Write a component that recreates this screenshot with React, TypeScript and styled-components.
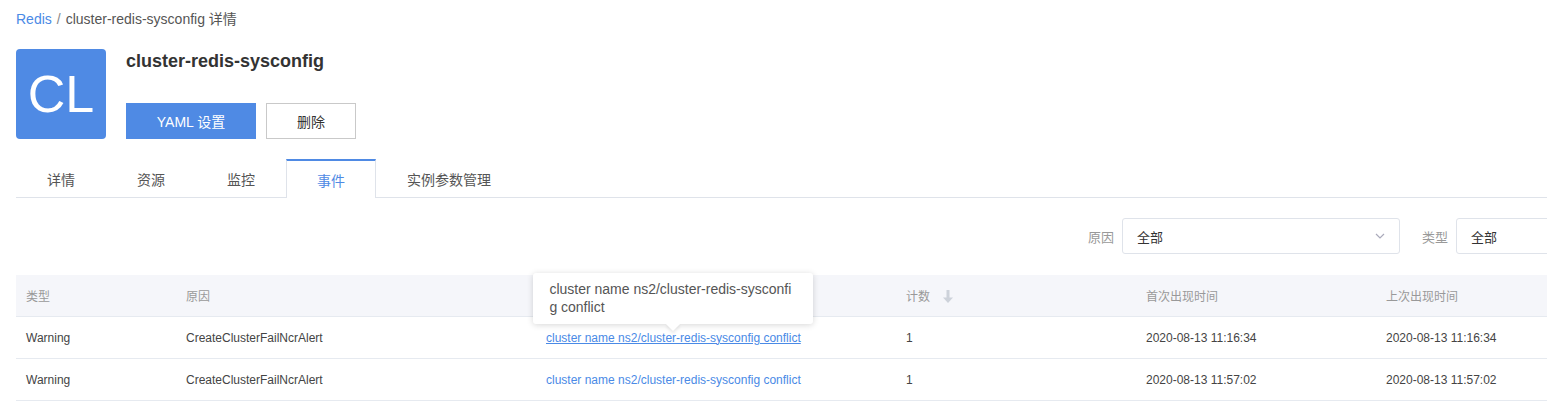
import React from 'react';
import styled, { createGlobalStyle } from 'styled-components';

const Global = createGlobalStyle`
  html, body {
    margin: 0;
    overflow: hidden;
    background: #fff;
  }
  body {
    font-family: "Liberation Sans", Arial, "Noto Sans CJK SC", sans-serif;
    color: #333;
  }
`;

const Page = styled.div`
  width: 1718px;
  padding: 10px 0 0 16px;
`;

const Breadcrumb = styled.div`
  font-size: 14px;
  line-height: 18px;
  color: #555;
  height: 18px;
`;

const Crumb = styled.a`
  color: #4a8ae6;
  text-decoration: none;
`;

const Sep = styled.span`
  margin: 0 5px;
  color: #888;
`;

const Header = styled.div`
  display: flex;
  gap: 20px;
  margin-top: 21px;
`;

const Avatar = styled.div`
  width: 90px;
  height: 90px;
  border-radius: 4px;
  background: #4f8ae4;
  color: #fff;
  font-size: 52px;
  display: flex;
  align-items: center;
  justify-content: center;
`;

const Info = styled.div`
  display: flex;
  flex-direction: column;
`;

const Title = styled.h1`
  margin: 0;
  font-size: 18px;
  line-height: 24px;
  font-weight: bold;
  color: #333;
`;

const Actions = styled.div`
  display: flex;
  gap: 10px;
  margin-top: 30px;
`;

const Button = styled.button<{ $primary?: boolean }>`
  height: 36px;
  width: ${p => (p.$primary ? 130 : 90)}px;
  font: inherit;
  font-size: 14px;
  border-radius: 0;
  cursor: pointer;
  ${p =>
    p.$primary
      ? `
    background: #4f8ae4;
    border: 1px solid #4f8ae4;
    color: #fff;
  `
      : `
    background: #fff;
    border: 1px solid #c9c9c9;
    color: #333;
  `}
`;

const TabBar = styled.div`
  display: flex;
  margin-top: 20px;
  height: 38px;
  border-bottom: 1px solid #dfe3ea;
`;

const Tab = styled.div<{ $active?: boolean }>`
  box-sizing: border-box;
  padding: 0 30px;
  height: ${p => (p.$active ? 39 : 38)}px;
  display: flex;
  align-items: center;
  font-size: 14px;
  color: ${p => (p.$active ? '#4f8ae4' : '#555')};
  border: 1px solid ${p => (p.$active ? '#dfe3ea' : 'transparent')};
  border-top: 2px solid ${p => (p.$active ? '#4f8ae4' : 'transparent')};
  border-bottom: none;
  background: ${p => (p.$active ? '#fff' : 'transparent')};
`;

const Filters = styled.div`
  display: flex;
  justify-content: flex-end;
  align-items: center;
  gap: 22px;
  margin-top: 20px;
`;

const Field = styled.label`
  display: flex;
  align-items: center;
  gap: 8px;
  font-size: 13px;
  color: #999;
`;

const Select = styled.div`
  box-sizing: border-box;
  width: 278px;
  height: 36px;
  border: 1px solid #dfe3ea;
  border-radius: 3px;
  padding: 0 14px;
  display: flex;
  align-items: center;
  justify-content: space-between;
  font-size: 13px;
  color: #333;
`;

const Chevron = () => (
  <svg width="10" height="6" viewBox="0 0 10 6">
    <path d="M1 1l4 4 4-4" fill="none" stroke="#aab" strokeWidth="1.2" />
  </svg>
);

const Table = styled.table`
  margin-top: 21px;
  border-collapse: separate;
  border-spacing: 0;
  table-layout: fixed;
  width: 100%;
  font-size: 12px;
`;

const Th = styled.th<{ $w?: number }>`
  width: ${p => (p.$w ? `${p.$w}px` : 'auto')};
  background: #f5f6fa;
  color: #999;
  font-weight: normal;
  text-align: left;
  height: 42px;
  padding: 0 10px;
  box-sizing: border-box;
  border-bottom: 1px solid #e6eaf0;
`;

const Td = styled.td`
  height: 42px;
  box-sizing: border-box;
  padding: 0 10px;
  color: #444;
  border-bottom: 1px solid #e6eaf0;
  white-space: nowrap;
`;

const SortIcon = () => (
  <svg width="12" height="14" viewBox="0 0 12 14" style={{ marginLeft: 12, verticalAlign: -3 }}>
    <path d="M6 0v9" stroke="#cdd2da" strokeWidth="3" />
    <path d="M1 7.5h10L6 13z" fill="#cdd2da" />
  </svg>
);

const MsgWrap = styled.span`
  position: relative;
  display: inline-block;
`;

const MsgLink = styled.a<{ $hover?: boolean }>`
  color: #4a8ae6;
  text-decoration: ${p => (p.$hover ? 'underline' : 'none')};
`;

const Tooltip = styled.div`
  position: absolute;
  bottom: calc(100% + 7px);
  left: 50%;
  transform: translateX(-50%);
  width: 280px;
  box-sizing: border-box;
  padding: 7px 16px 8px;
  background: #fff;
  border-radius: 3px;
  box-shadow: 0 1px 6px rgba(0, 0, 0, 0.16);
  font-size: 14px;
  line-height: 18px;
  color: #555;
  white-space: normal;
  word-break: break-all;
  z-index: 2;

  &::after {
    content: '';
    position: absolute;
    left: 50%;
    bottom: -5px;
    width: 10px;
    height: 10px;
    background: #fff;
    transform: translateX(-50%) rotate(45deg);
    box-shadow: 2px 2px 3px rgba(0, 0, 0, 0.08);
  }
`;

const events = [
  { type: 'Warning', reason: 'CreateClusterFailNcrAlert', msg: 'cluster name ns2/cluster-redis-sysconfig conflict', count: 1, first: '2020-08-13 11:16:34', last: '2020-08-13 11:16:34' },
  { type: 'Warning', reason: 'CreateClusterFailNcrAlert', msg: 'cluster name ns2/cluster-redis-sysconfig conflict', count: 1, first: '2020-08-13 11:57:02', last: '2020-08-13 11:57:02' },
];

const tabs = ['详情', '资源', '监控', '事件', '实例参数管理'];

export default function App() {
  return (
    <Page>
      <Global />
      <Breadcrumb>
        <Crumb>Redis</Crumb>
        <Sep>/</Sep>
        cluster-redis-sysconfig 详情
      </Breadcrumb>

      <Header>
        <Avatar>CL</Avatar>
        <Info>
          <Title>cluster-redis-sysconfig</Title>
          <Actions>
            <Button $primary>YAML 设置</Button>
            <Button>删除</Button>
          </Actions>
        </Info>
      </Header>

      <TabBar>
        {tabs.map(t => (
          <Tab key={t} $active={t === '事件'}>{t}</Tab>
        ))}
      </TabBar>

      <Filters>
        <Field>
          原因
          <Select>
            全部
            <Chevron />
          </Select>
        </Field>
        <Field>
          类型
          <Select>
            全部
            <Chevron />
          </Select>
        </Field>
      </Filters>

      <Table>
        <thead>
          <tr>
            <Th $w={160}>类型</Th>
            <Th $w={360}>原因</Th>
            <Th $w={360} />
            <Th $w={240}>计数<SortIcon /></Th>
            <Th $w={240}>首次出现时间</Th>
            <Th>上次出现时间</Th>
          </tr>
        </thead>
        <tbody>
          {events.map((e, i) => (
            <tr key={i}>
              <Td>{e.type}</Td>
              <Td>{e.reason}</Td>
              <Td>
                <MsgWrap>
                  {i === 0 && <Tooltip>{e.msg}</Tooltip>}
                  <MsgLink $hover={i === 0}>{e.msg}</MsgLink>
                </MsgWrap>
              </Td>
              <Td>{e.count}</Td>
              <Td>{e.first}</Td>
              <Td>{e.last}</Td>
            </tr>
          ))}
        </tbody>
      </Table>
    </Page>
  );
}
